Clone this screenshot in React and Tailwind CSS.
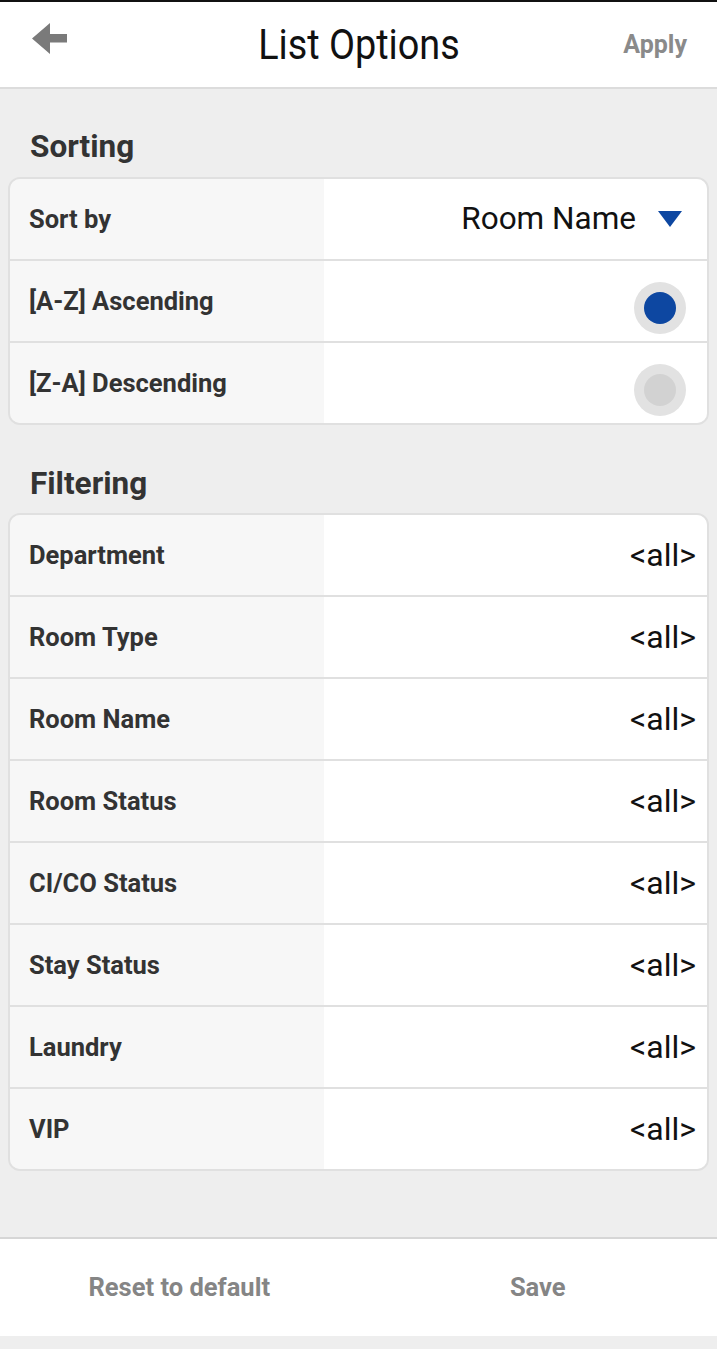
import React from "react";

const font = { fontFamily: "Roboto, 'Noto Sans', 'Liberation Sans', sans-serif" };

function Row({ label, children, last }) {
  return (
    <div className={`flex ${last ? "h-[80px]" : "h-[82px] border-b-2 border-[#e0e0e0]"}`}>
      <div className="w-[314px] shrink-0 bg-[#f7f7f7] flex items-center pl-[19px] text-[25.5px] font-bold text-[#333333]">
        {label}
      </div>
      <div className="flex-1 bg-white flex items-center justify-end">{children}</div>
    </div>
  );
}

function Radio({ on }) {
  return (
    <div className="mr-[21px] mt-[14px] w-[52px] h-[52px] rounded-full bg-[#e2e2e2] flex items-center justify-center">
      <div className={`w-[32px] h-[32px] rounded-full ${on ? "bg-[#0d47a1]" : "bg-[#d2d2d2]"}`} />
    </div>
  );
}

const filters = [
  "Department",
  "Room Type",
  "Room Name",
  "Room Status",
  "CI/CO Status",
  "Stay Status",
  "Laundry",
  "VIP",
];

export default function App() {
  return (
    <div className="h-[1349px] w-full flex flex-col bg-[#eeeeee]" style={font}>
      <div className="h-[2px] bg-[#111111]" />
      <header className="h-[85px] bg-white grid grid-cols-[1fr_auto_1fr] items-center border-b-2 border-[#dcdcdc] box-content">
        <div className="pl-[32px] self-start pt-[21px]">
          <svg width="35" height="31" viewBox="0 0 35 31">
            <polygon points="0,15.5 18,0 18,11 35,11 35,19.5 18,19.5 18,31" fill="#7a7a7a" />
          </svg>
        </div>
        <div className="text-[42px] leading-[85px] text-[#111111] scale-x-90 whitespace-nowrap">List Options</div>
        <div className="flex justify-end pr-[30px] text-[25px] font-bold text-[#8a8a8a]">Apply</div>
      </header>

      <main className="flex-1 px-[8px]">
        <div className="mt-[40px] pl-[22px] h-[36px] text-[31.5px] leading-[36px] font-bold text-[#333333] mb-[12px]">
          Sorting
        </div>
        <div className="rounded-[12px] border-2 border-[#e0e0e0] overflow-hidden">
          <Row label="Sort by">
            <span className="text-[31.5px] text-[#111111]">Room Name</span>
            <svg className="ml-[22px] mr-[25px]" width="24" height="16" viewBox="0 0 24 16">
              <polygon points="0,0 24,0 12,16" fill="#0d47a1" />
            </svg>
          </Row>
          <Row label="[A-Z] Ascending">
            <Radio on />
          </Row>
          <Row label="[Z-A] Descending" last>
            <Radio />
          </Row>
        </div>

        <div className="mt-[41px] pl-[22px] h-[36px] text-[31.5px] leading-[36px] font-bold text-[#333333] mb-[11px]">
          Filtering
        </div>
        <div className="rounded-[12px] border-2 border-[#e0e0e0] overflow-hidden">
          {filters.map((f, i) => (
            <Row key={f} label={f} last={i === filters.length - 1}>
              <span className="pr-[11px] text-[32px] text-[#111111]">&lt;all&gt;</span>
            </Row>
          ))}
        </div>
      </main>

      <footer className="border-t-2 border-[#d6d6d6] bg-white h-[97px] box-content flex items-center">
        <div className="flex-1 flex justify-center text-[25.5px] font-bold text-[#858585]">Reset to default</div>
        <div className="flex-1 flex justify-center text-[25.5px] font-bold text-[#858585]">Save</div>
      </footer>
      <div className="h-[13px] bg-[#eeeeee]" />
    </div>
  );
}
